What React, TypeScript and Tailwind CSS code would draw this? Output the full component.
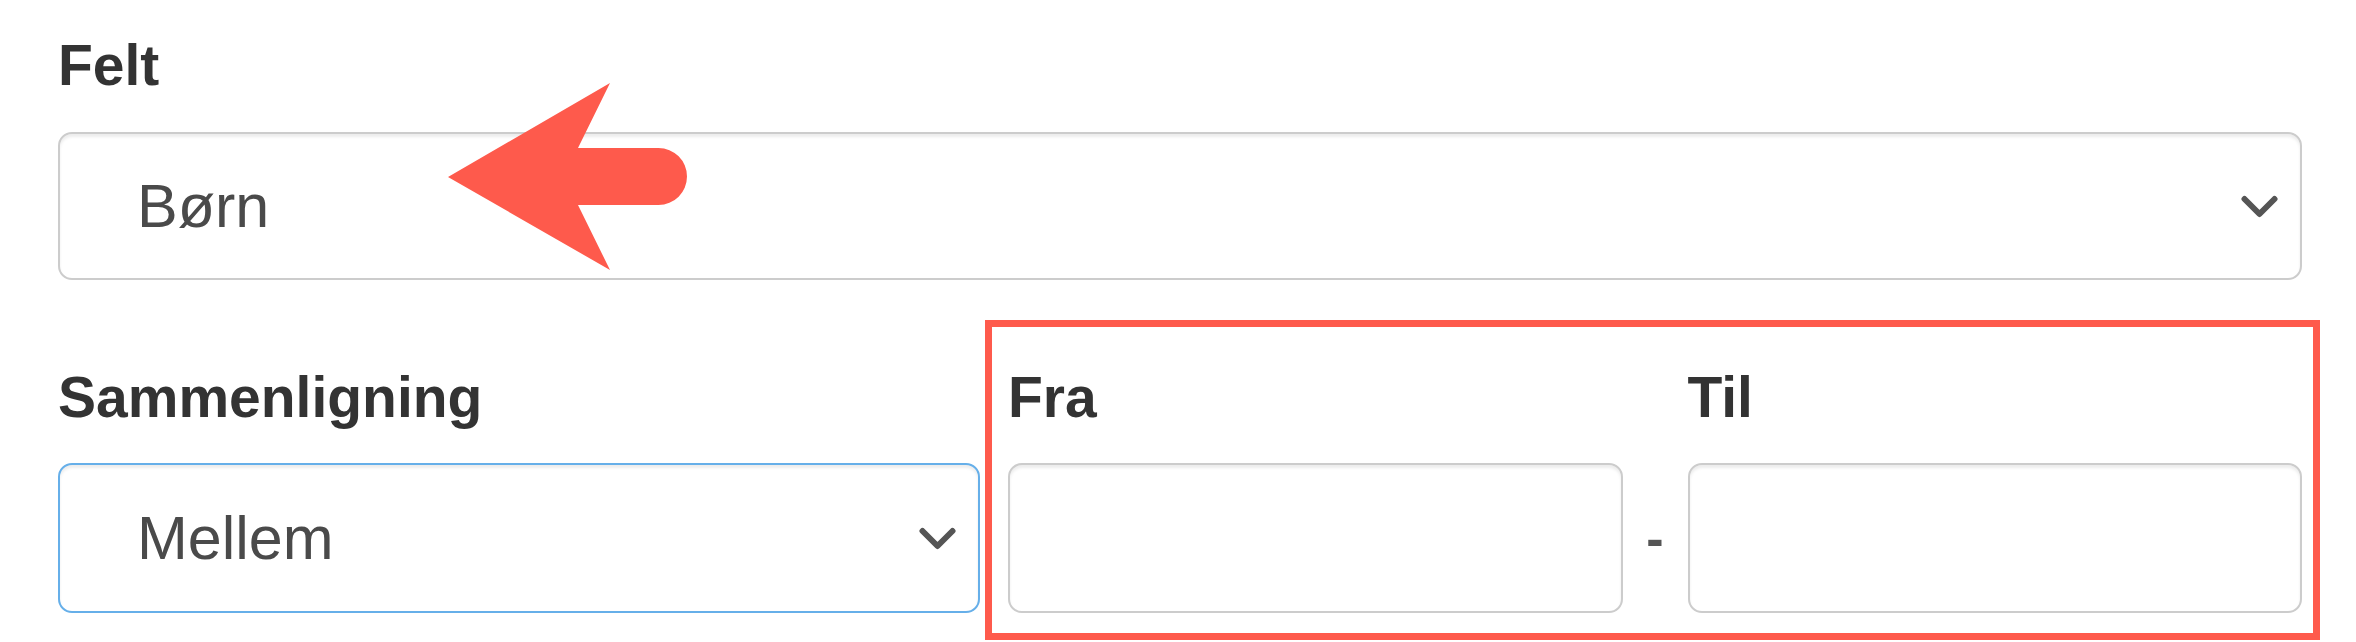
import React from 'react';

const labelClass =
  "block text-[57px] leading-none font-bold text-[#333333] font-['Liberation_Sans',Arial,sans-serif]";

const fieldBase =
  'bg-white border-2 rounded-[14px] shadow-[inset_0_3px_3px_rgba(0,0,0,0.075)]';

const Chevron: React.FC = () => (
  <svg width="37" height="23" viewBox="0 0 37 23" fill="none" className="shrink-0">
    <path d="M3.5 4 L18.5 19 L33.5 4" stroke="#555555" strokeWidth={6} strokeLinecap="round" strokeLinejoin="round" />
  </svg>
);

interface SelectBoxProps {
  value: string;
  focused?: boolean;
  className?: string;
}

const SelectBox: React.FC<SelectBoxProps> = ({ value, focused, className }) => (
  <div
    className={
      `${fieldBase} flex items-center justify-between pl-[77px] pr-[22px] ` +
      (focused
        ? 'border-[#66afe9] shadow-[inset_0_3px_3px_rgba(0,0,0,0.075),0_0_28px_rgba(102,175,233,0.7)] '
        : 'border-[#cccccc] ') +
      (className ?? '')
    }
  >
    <span className="text-[61px] leading-none text-[#4a4a4a] font-['Liberation_Sans',Arial,sans-serif]">{value}</span>
    <Chevron />
  </div>
);

const RedArrow: React.FC = () => (
  <svg
    className="absolute left-[448px] top-[83px] pointer-events-none"
    width="240"
    height="188"
    viewBox="0 0 240 188"
  >
    <path
      d="M0 94 L162 0 L130 65 L210.5 65 A28.5 28.5 0 0 1 210.5 122 L130 122 L162 187 Z"
      fill="#fe5a4c"
    />
  </svg>
);

export default function App() {
  return (
    <div className="relative w-[2356px] h-[642px] overflow-hidden bg-white pl-[58px] pr-[54px] pt-[37px] font-['Liberation_Sans',Arial,sans-serif]">
      <label className={labelClass}>Felt</label>
      <SelectBox value="Børn" className="mt-[38px] h-[148px]" />

      <div className="grid grid-cols-[922px_1fr] gap-x-[28px] mt-[89px]">
        <div>
          <label className={labelClass}>Sammenligning</label>
          <SelectBox value="Mellem" focused className="mt-[37px] h-[150px]" />
        </div>

        <div className="relative">
          <div className="grid grid-cols-[1fr_65px_1fr]">
            <label className={labelClass}>Fra</label>
            <div />
            <label className={labelClass}>Til</label>
            <input
              type="text"
              className={`${fieldBase} border-[#cccccc] mt-[37px] h-[150px] w-full outline-none`}
            />
            <div className="mt-[37px] h-[150px] flex items-center justify-center text-[52px] leading-none text-[#555555] font-bold">
              -
            </div>
            <input
              type="text"
              className={`${fieldBase} border-[#cccccc] mt-[37px] h-[150px] w-full outline-none`}
            />
          </div>
          <div className="absolute left-[-23px] right-[-18px] top-[-49px] bottom-[-27px] border-[7px] border-[#fe5a4c] pointer-events-none" />
        </div>
      </div>

      <RedArrow />
    </div>
  );
}
